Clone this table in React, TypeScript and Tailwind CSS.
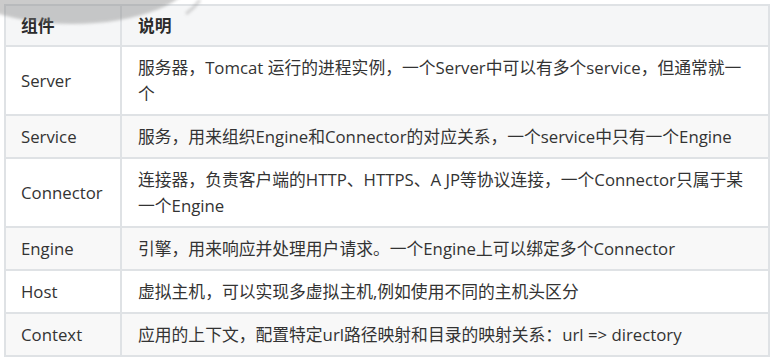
const rows: [string, string][] = [
  ["Server", "服务器，Tomcat 运行的进程实例，一个Server中可以有多个service，但通常就一个"],
  ["Service", "服务，用来组织Engine和Connector的对应关系，一个service中只有一个Engine"],
  ["Connector", "连接器，负责客户端的HTTP、HTTPS、A JP等协议连接，一个Connector只属于某一个Engine"],
  ["Engine", "引擎，用来响应并处理用户请求。一个Engine上可以绑定多个Connector"],
  ["Host", "虚拟主机，可以实现多虚拟主机,例如使用不同的主机头区分"],
  ["Context", "应用的上下文，配置特定url路径映射和目录的映射关系：url => directory"],
];

const font = { fontFamily: '"Open Sans", "Noto Sans CJK SC", sans-serif' };

export default function App() {
  return (
    <div className="relative w-[777px] h-[359px] bg-white overflow-hidden" style={font}>
      <div className="pt-[4px] pl-[4px]">
        <table className="w-[766px] border-separate border-spacing-0 border-l-2 border-t-2 border-[#dfe2e5] text-[16.8px] leading-[26px] text-[#333]">
          <thead>
            <tr className="bg-[#f5f6f7]">
              <th className="w-[116px] border-r-2 border-b-2 border-[#dfe2e5] pl-[15px] pr-2 pt-[7px] pb-[6px] text-left font-bold text-[#2b2b2b]">组件</th>
              <th className="border-r-2 border-b-2 border-[#dfe2e5] pl-[16px] pr-4 pt-[7px] pb-[6px] text-left font-bold text-[#2b2b2b]">说明</th>
            </tr>
          </thead>
          <tbody>
            {rows.map(([name, desc], i) => (
              <tr key={name} className={i % 2 === 1 ? "bg-[#f8f8f8]" : "bg-white"}>
                <td className="border-r-2 border-b-2 border-[#dfe2e5] pl-[15px] pr-2 py-[7.5px] align-middle">{name}</td>
                <td className="border-r-2 border-b-2 border-[#dfe2e5] pl-[16px] pr-[14px] py-[7.5px] align-middle">{desc}</td>
              </tr>
            ))}
          </tbody>
        </table>
      </div>

      {/* grey arc bleeding in from the page above */}
      <svg className="pointer-events-none absolute left-0 top-0" width="240" height="40" viewBox="0 0 240 40">
        <defs>
          <filter id="soft" x="-20%" y="-50%" width="140%" height="200%">
            <feGaussianBlur stdDeviation="1.8" />
          </filter>
        </defs>
        <ellipse cx="72" cy="-26" rx="122" ry="50" fill="#808080" opacity="0.4" filter="url(#soft)" />
        <path d="M200 0 Q194 8 186 14" stroke="#999" strokeWidth="3" fill="none" opacity="0.4" filter="url(#soft)" />
      </svg>
    </div>
  );
}
